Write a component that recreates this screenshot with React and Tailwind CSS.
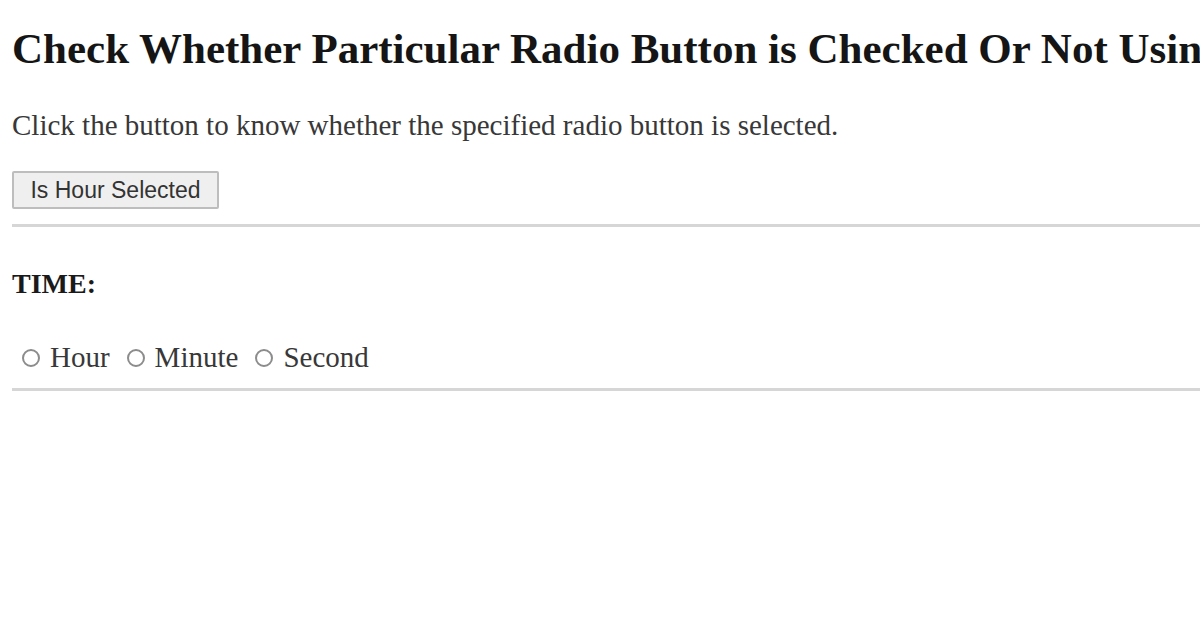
export default function App() {
  return (
    <div className="min-h-[627px] w-[1200px] overflow-hidden bg-white pl-[12px] pt-[25px] font-['Liberation_Serif',serif]">
      <h2 className="whitespace-nowrap text-[43px] font-bold leading-[48px] text-[#151515]">
        Check Whether Particular Radio Button is Checked Or Not Using jQuery
      </h2>
      <p className="mt-[36px] text-[29px] leading-[33px] text-[#383838]">
        Click the button to know whether the specified radio button is selected.
      </p>
      <button className="mt-[29px] block h-[38px] w-[207px] rounded-[2px] border-2 border-[#bdbdbd] bg-[#efefef] font-['Liberation_Sans',sans-serif] text-[23px] leading-[26px] text-[#333]">
        Is Hour Selected
      </button>
      <div className="mt-[15px] h-[3px] w-full bg-[#d6d6d6]" />
      <h4 className="mt-[41px] text-[28px] font-bold leading-[31px] text-[#1a1a1a]">TIME:</h4>
      <div className="mt-[42px] flex items-center pl-[10px] text-[29px] leading-[33px] text-[#383838]">
        <span className="mr-[10px] h-[18px] w-[18px] rounded-full border-2 border-[#8c8c8c]" />
        <span className="mr-[17px]">Hour</span>
        <span className="mr-[10px] h-[18px] w-[18px] rounded-full border-2 border-[#8c8c8c]" />
        <span className="mr-[17px]">Minute</span>
        <span className="mr-[10px] h-[18px] w-[18px] rounded-full border-2 border-[#8c8c8c]" />
        <span>Second</span>
      </div>
      <div className="mt-[14px] h-[3px] w-full bg-[#d6d6d6]" />
    </div>
  );
}
